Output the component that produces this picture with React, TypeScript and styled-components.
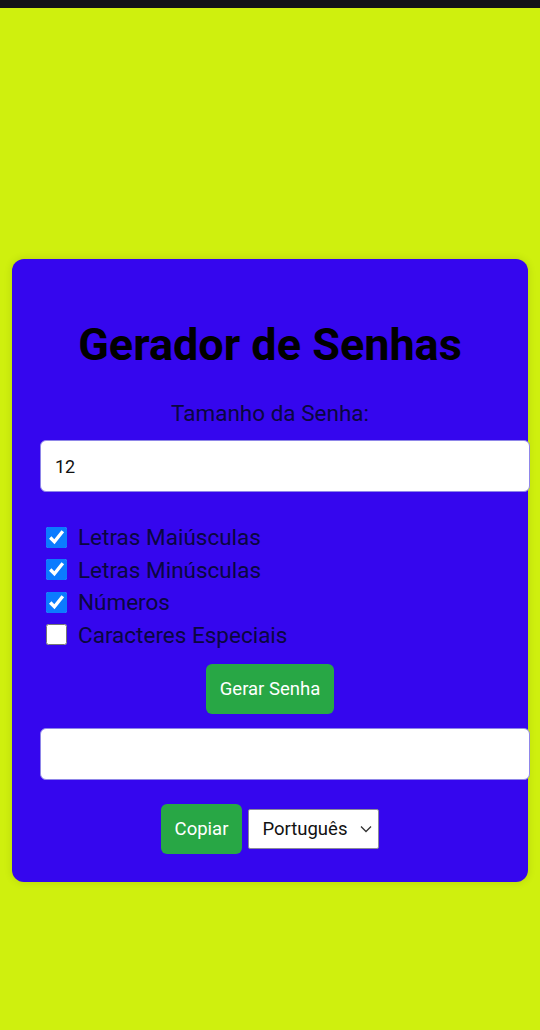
import React, { useState } from 'react';
import styled, { createGlobalStyle } from 'styled-components';

const GlobalStyle = createGlobalStyle`
  html, body {
    margin: 0;
    padding: 0;
    background: #cff00e;
    font-family: Roboto, "Liberation Sans", Arial, sans-serif;
  }
`;

const Page = styled.div`
  min-height: 1030px;
  display: flex;
  flex-direction: column;
  background: #cff00e;
`;

const StatusBar = styled.div`
  height: 8px;
  background: #121317;
`;

const Main = styled.main`
  padding: 251px 12px 149px;
`;

const Card = styled.div`
  background: #3506ee;
  border-radius: 12px;
  padding: 28px 28px 28px;
  box-shadow: 0 0 8px rgba(0, 0, 0, 0.12);
  display: flex;
  flex-direction: column;
`;

const Title = styled.h1`
  margin: 31px 0 0;
  font-size: 45px;
  line-height: 53px;
  font-weight: 700;
  color: #000;
  text-align: center;
`;

const Label = styled.div`
  margin-top: 29px;
  font-size: 22.5px;
  line-height: 26px;
  color: #0a0640;
  text-align: center;
`;

const TextField = styled.input<{ $top: number }>`
  box-sizing: content-box;
  width: 100%;
  height: 22px;
  margin: ${(p) => p.$top}px 0 0;
  padding: 14px 14px;
  border: 1px solid #8f86e8;
  border-radius: 6px;
  background: #fff;
  font-family: inherit;
  font-size: 18px;
  color: #111;
  outline: none;
`;

const Options = styled.div`
  margin-top: 29px;
  display: flex;
  flex-direction: column;
`;

const OptionRow = styled.label`
  height: 32.5px;
  display: flex;
  align-items: center;
  gap: 11px;
  padding-left: 6px;
  font-size: 22.5px;
  color: #0a0640;
`;

const Check = styled.input`
  width: 21px;
  height: 21px;
  margin: 0;
  accent-color: #0b7bff;
`;

const Row = styled.div<{ $top: number; $gap: number }>`
  margin-top: ${(p) => p.$top}px;
  display: flex;
  justify-content: center;
  align-items: center;
  gap: ${(p) => p.$gap}px;
`;

const GreenButton = styled.button<{ $pad: number }>`
  height: 50px;
  padding: 0 ${(p) => p.$pad}px;
  border: none;
  border-radius: 6px;
  background: #28a745;
  color: #fff;
  font-family: inherit;
  font-size: 18.5px;
  cursor: pointer;
`;

const SelectWrap = styled.div`
  position: relative;
  width: 131px;
  height: 40px;
`;

const Select = styled.select`
  appearance: none;
  width: 100%;
  height: 100%;
  padding: 0 30px 0 13px;
  border: 1px solid #8a8a9a;
  border-radius: 2px;
  background: #fff;
  font-family: inherit;
  font-size: 18.5px;
  color: #111;
`;

const Chevron = styled.svg`
  position: absolute;
  right: 7px;
  top: 16px;
  pointer-events: none;
`;

const options = [
  { label: 'Letras Maiúsculas', on: true },
  { label: 'Letras Minúsculas', on: true },
  { label: 'Números', on: true },
  { label: 'Caracteres Especiais', on: false },
];

export default function App() {
  const [size, setSize] = useState('12');
  const [flags, setFlags] = useState(options.map((o) => o.on));

  return (
    <Page>
      <GlobalStyle />
      <StatusBar />
      <Main>
        <Card>
          <Title>Gerador de Senhas</Title>
          <Label>Tamanho da Senha:</Label>
          <TextField $top={14} value={size} onChange={(e) => setSize(e.target.value)} />
          <Options>
            {options.map((o, i) => (
              <OptionRow key={o.label}>
                <Check
                  type="checkbox"
                  checked={flags[i]}
                  onChange={() => setFlags(flags.map((f, j) => (j === i ? !f : f)))}
                />
                {o.label}
              </OptionRow>
            ))}
          </Options>
          <Row $top={13} $gap={0}>
            <GreenButton $pad={14}>Gerar Senha</GreenButton>
          </Row>
          <TextField $top={14} readOnly value="" />
          <Row $top={24} $gap={6}>
            <GreenButton $pad={14}>Copiar</GreenButton>
            <SelectWrap>
              <Select defaultValue="pt">
                <option value="pt">Português</option>
                <option value="en">English</option>
              </Select>
              <Chevron width="12" height="8" viewBox="0 0 12 8">
                <path d="M1 1.5 L6 6.5 L11 1.5" fill="none" stroke="#333" strokeWidth="1.3" />
              </Chevron>
            </SelectWrap>
          </Row>
        </Card>
      </Main>
    </Page>
  );
}
